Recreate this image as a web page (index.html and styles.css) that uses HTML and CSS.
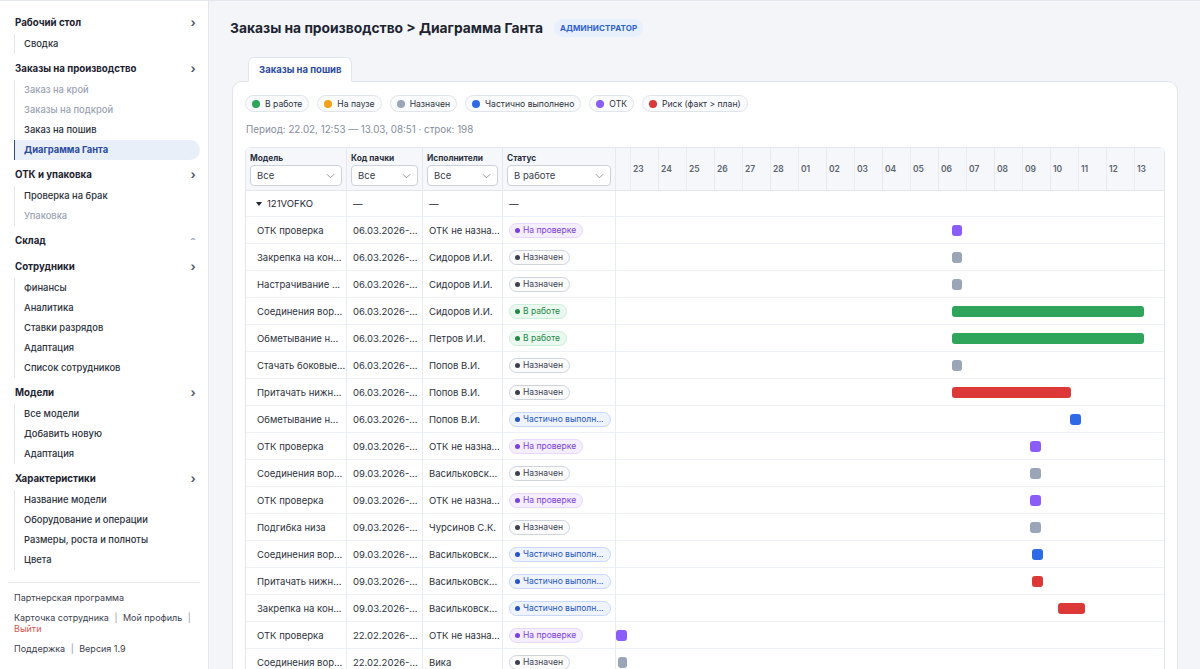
FILE: index.html
```html
<!DOCTYPE html>
<html lang="ru">
<head>
    <meta charset="UTF-8">
    <title>Диаграмма Ганта</title>
    <link rel="stylesheet" href="styles.css">
</head>
<body>
<div class="layout">
    <aside class="sidebar">
        <div class="nav-group">
            <div class="nav-title">Рабочий стол <span class="chev">›</span></div>
            <ul class="nav-sub">
                <li>Сводка</li>
            </ul>
        </div>
        <div class="nav-group">
            <div class="nav-title">Заказы на производство <span class="chev">›</span></div>
            <ul class="nav-sub">
                <li class="muted">Заказ на крой</li>
                <li class="muted">Заказы на подкрой</li>
                <li>Заказ на пошив</li>
                <li class="active">Диаграмма Ганта</li>
            </ul>
        </div>
        <div class="nav-group">
            <div class="nav-title">ОТК и упаковка <span class="chev">›</span></div>
            <ul class="nav-sub">
                <li>Проверка на брак</li>
                <li class="muted">Упаковка</li>
            </ul>
        </div>
        <div class="nav-group">
            <div class="nav-title">Склад <span class="chev up">ˆ</span></div>
        </div>
        <div class="nav-group">
            <div class="nav-title">Сотрудники <span class="chev">›</span></div>
            <ul class="nav-sub">
                <li>Финансы</li>
                <li>Аналитика</li>
                <li>Ставки разрядов</li>
                <li>Адаптация</li>
                <li>Список сотрудников</li>
            </ul>
        </div>
        <div class="nav-group">
            <div class="nav-title">Модели <span class="chev">›</span></div>
            <ul class="nav-sub">
                <li>Все модели</li>
                <li>Добавить новую</li>
                <li>Адаптация</li>
            </ul>
        </div>
        <div class="nav-group">
            <div class="nav-title">Характеристики <span class="chev">›</span></div>
            <ul class="nav-sub">
                <li>Название модели</li>
                <li>Оборудование и операции</li>
                <li>Размеры, роста и полноты</li>
                <li>Цвета</li>
            </ul>
        </div>
        <div class="side-footer">
            <p>Партнерская программа</p>
            <p>Карточка сотрудника <span class="sep">|</span> Мой профиль <span class="sep">|</span><br><span class="logout">Выйти</span></p>
            <p>Поддержка <span class="sep">|</span> Версия 1.9</p>
        </div>
    </aside>

    <main class="main">
        <div class="page-head">
            <h1>Заказы на производство &gt; Диаграмма Ганта</h1>
            <span class="role">Администратор</span>
        </div>

        <div class="tabs">
            <div class="tab">Заказы на пошив</div>
        </div>

        <section class="card">
            <div class="legend">
                <span class="pill"><i class="dot green"></i>В работе</span>
                <span class="pill"><i class="dot orange"></i>На паузе</span>
                <span class="pill"><i class="dot gray"></i>Назначен</span>
                <span class="pill"><i class="dot blue"></i>Частично выполнено</span>
                <span class="pill"><i class="dot purple"></i>ОТК</span>
                <span class="pill"><i class="dot red"></i>Риск (факт &gt; план)</span>
            </div>
            <p class="period">Период: 22.02, 12:53 — 13.03, 08:51 · строк: 198</p>

            <table class="gantt">
                <colgroup>
                    <col class="c-model">
                    <col class="c-code">
                    <col class="c-exec">
                    <col class="c-status">
                    <col>
                </colgroup>
                <thead>
                    <tr>
                        <th>
                            <div class="th-label">Модель</div>
                            <div class="select">Все<svg viewBox="0 0 10 6"><polyline points="1,1 5,5 9,1"/></svg></div>
                        </th>
                        <th>
                            <div class="th-label">Код пачки</div>
                            <div class="select">Все<svg viewBox="0 0 10 6"><polyline points="1,1 5,5 9,1"/></svg></div>
                        </th>
                        <th>
                            <div class="th-label">Исполнители</div>
                            <div class="select">Все<svg viewBox="0 0 10 6"><polyline points="1,1 5,5 9,1"/></svg></div>
                        </th>
                        <th>
                            <div class="th-label">Статус</div>
                            <div class="select">В работе<svg viewBox="0 0 10 6"><polyline points="1,1 5,5 9,1"/></svg></div>
                        </th>
                        <th class="days-head">
                            <div class="days">
                                <span>23</span><span>24</span><span>25</span><span>26</span><span>27</span><span>28</span><span>01</span><span>02</span><span>03</span><span>04</span><span>05</span><span>06</span><span>07</span><span>08</span><span>09</span><span>10</span><span>11</span><span>12</span><span>13</span>
                            </div>
                        </th>
                    </tr>
                </thead>
                <tbody>
                    <tr class="group">
                        <td><span class="caret"></span>121VOFKO</td>
                        <td>—</td><td>—</td><td>—</td><td class="track"></td>
                    </tr>
                    <tr>
                        <td>ОТК проверка</td><td>06.03.2026-...</td><td>ОТК не назна...</td>
                        <td><span class="badge check">На проверке</span></td>
                        <td class="track"><span class="bar purple" style="left:336px;width:10px"></span></td>
                    </tr>
                    <tr>
                        <td>Закрепка на кон...</td><td>06.03.2026-...</td><td>Сидоров И.И.</td>
                        <td><span class="badge assigned">Назначен</span></td>
                        <td class="track"><span class="bar gray" style="left:336px;width:10px"></span></td>
                    </tr>
                    <tr>
                        <td>Настрачивание ...</td><td>06.03.2026-...</td><td>Сидоров И.И.</td>
                        <td><span class="badge assigned">Назначен</span></td>
                        <td class="track"><span class="bar gray" style="left:336px;width:10px"></span></td>
                    </tr>
                    <tr>
                        <td>Соединения вор...</td><td>06.03.2026-...</td><td>Сидоров И.И.</td>
                        <td><span class="badge work">В работе</span></td>
                        <td class="track"><span class="bar green" style="left:336px;width:192px"></span></td>
                    </tr>
                    <tr>
                        <td>Обметывание н...</td><td>06.03.2026-...</td><td>Петров И.И.</td>
                        <td><span class="badge work">В работе</span></td>
                        <td class="track"><span class="bar green" style="left:336px;width:192px"></span></td>
                    </tr>
                    <tr>
                        <td>Стачать боковые...</td><td>06.03.2026-...</td><td>Попов В.И.</td>
                        <td><span class="badge assigned">Назначен</span></td>
                        <td class="track"><span class="bar gray" style="left:336px;width:10px"></span></td>
                    </tr>
                    <tr>
                        <td>Притачать нижн...</td><td>06.03.2026-...</td><td>Попов В.И.</td>
                        <td><span class="badge assigned">Назначен</span></td>
                        <td class="track"><span class="bar red" style="left:336px;width:119px"></span></td>
                    </tr>
                    <tr>
                        <td>Обметывание н...</td><td>06.03.2026-...</td><td>Попов В.И.</td>
                        <td><span class="badge partial">Частично выполн...</span></td>
                        <td class="track"><span class="bar blue" style="left:454px;width:11px"></span></td>
                    </tr>
                    <tr>
                        <td>ОТК проверка</td><td>09.03.2026-...</td><td>ОТК не назна...</td>
                        <td><span class="badge check">На проверке</span></td>
                        <td class="track"><span class="bar purple" style="left:414px;width:11px"></span></td>
                    </tr>
                    <tr>
                        <td>Соединения вор...</td><td>09.03.2026-...</td><td>Васильковск...</td>
                        <td><span class="badge assigned">Назначен</span></td>
                        <td class="track"><span class="bar gray" style="left:414px;width:11px"></span></td>
                    </tr>
                    <tr>
                        <td>ОТК проверка</td><td>09.03.2026-...</td><td>ОТК не назна...</td>
                        <td><span class="badge check">На проверке</span></td>
                        <td class="track"><span class="bar purple" style="left:414px;width:11px"></span></td>
                    </tr>
                    <tr>
                        <td>Подгибка низа</td><td>09.03.2026-...</td><td>Чурсинов С.К.</td>
                        <td><span class="badge assigned">Назначен</span></td>
                        <td class="track"><span class="bar gray" style="left:414px;width:11px"></span></td>
                    </tr>
                    <tr>
                        <td>Соединения вор...</td><td>09.03.2026-...</td><td>Васильковск...</td>
                        <td><span class="badge partial">Частично выполн...</span></td>
                        <td class="track"><span class="bar blue" style="left:416px;width:11px"></span></td>
                    </tr>
                    <tr>
                        <td>Притачать нижн...</td><td>09.03.2026-...</td><td>Васильковск...</td>
                        <td><span class="badge partial">Частично выполн...</span></td>
                        <td class="track"><span class="bar red" style="left:416px;width:11px"></span></td>
                    </tr>
                    <tr>
                        <td>Закрепка на кон...</td><td>09.03.2026-...</td><td>Васильковск...</td>
                        <td><span class="badge partial">Частично выполн...</span></td>
                        <td class="track"><span class="bar red" style="left:442px;width:27px"></span></td>
                    </tr>
                    <tr>
                        <td>ОТК проверка</td><td>22.02.2026-...</td><td>ОТК не назна...</td>
                        <td><span class="badge check">На проверке</span></td>
                        <td class="track"><span class="bar purple" style="left:0;width:11px"></span></td>
                    </tr>
                    <tr>
                        <td>Соединения вор...</td><td>22.02.2026-...</td><td>Вика</td>
                        <td><span class="badge assigned">Назначен</span></td>
                        <td class="track"><span class="bar gray" style="left:2px;width:9px"></span></td>
                    </tr>
                </tbody>
            </table>
        </section>
    </main>
</div>
</body>
</html>
```

FILE: styles.css
```css
/* General */
* {
    box-sizing: border-box;
}

html, body {
    margin: 0;
    height: 100%;
    overflow: hidden;
}

body {
    font-family: Inter, "Noto Sans", sans-serif;
    color: #1f2533;
    background-color: #f3f5f9;
}

.layout {
    display: flex;
    height: 100%;
    border-top: 1px solid #e4e7ee;
}

/* Sidebar */
.sidebar {
    width: 209px;
    flex-shrink: 0;
    background-color: #fff;
    border-right: 1px solid #e4e7ee;
    padding: 9px 8px 0 14px;
}

.nav-group {
    margin-bottom: 2px;
}

.nav-title {
    display: flex;
    justify-content: space-between;
    align-items: center;
    height: 24px;
    padding-left: 1px;
    font-size: 9.7px;
    font-weight: 700;
    color: #1c2230;
}

.chev {
    width: 14px;
    font-size: 12px;
    font-weight: 700;
    color: #555b68;
    text-align: center;
}

.chev.up {
    font-size: 13px;
    color: #a3a9b5;
    padding-top: 5px;
}

.nav-sub {
    list-style: none;
    margin: 0;
    padding: 0;
    border-left: 1px solid #e3e6ec;
}

.nav-sub li {
    height: 20px;
    line-height: 20px;
    padding-left: 9px;
    font-size: 9.4px;
    font-weight: 500;
    color: #2a303c;
}

.nav-sub li.muted {
    color: #9ba3b3;
}

.nav-sub li.active {
    margin-left: -1px;
    border-left: 1px solid #2b4a8f;
    border-radius: 0 10px 10px 0;
    background-color: #e9eff9;
    color: #2b4ba0;
    font-weight: 700;
}

.side-footer {
    margin: 12px 0 0 -6px;
    padding: 9px 0 0 6px;
    border-top: 1px solid #e6e9ef;
}

.side-footer p {
    margin: 0 0 9px;
    font-size: 9px;
    line-height: 11px;
    color: #3b4150;
}

.side-footer .sep {
    color: #8c93a0;
    margin: 0 3px;
}

.logout {
    color: #d9534f;
}

/* Main area */
.main {
    flex: 1;
    padding: 0 22px 0 23px;
    min-width: 0;
}

.page-head {
    display: flex;
    align-items: center;
    height: 56px;
    padding-bottom: 2px;
}

.page-head h1 {
    margin: 0 11px 0 -2px;
    font-size: 13.8px;
    font-weight: 700;
    color: #1e2431;
}

.role {
    padding: 4px 6px;
    border-radius: 9px;
    background-color: #e8f0fd;
    color: #2f62cc;
    font-size: 8px;
    font-weight: 700;
    text-transform: uppercase;
    letter-spacing: 0.1px;
}

/* Tabs */
.tabs {
    display: flex;
    padding-left: 16px;
    margin-bottom: -1px;
    position: relative;
}

.tab {
    height: 25px;
    line-height: 24px;
    padding: 0 10px;
    background-color: #fff;
    border: 1px solid #e3e6ec;
    border-bottom-color: #fff;
    border-radius: 6px 6px 0 0;
    color: #2b4ba0;
    font-size: 9.5px;
    font-weight: 700;
}

/* Card */
.card {
    background-color: #fff;
    border: 1px solid #e3e6ec;
    border-radius: 10px;
    padding: 13px 13px 0 12px;
    height: 620px;
}

.legend {
    display: flex;
    gap: 8px;
}

.pill {
    display: inline-flex;
    align-items: center;
    height: 17px;
    padding: 0 6px 0 6px;
    border: 1px solid #dfe3ea;
    border-radius: 9px;
    background-color: #fafbfc;
    font-size: 8.6px;
    color: #2d3340;
}

.dot {
    width: 8px;
    height: 8px;
    border-radius: 50%;
    margin-right: 5px;
}

.green { background-color: #2ea55a; }
.orange { background-color: #f0a21b; }
.gray { background-color: #9aa5b8; }
.blue { background-color: #2f6ae6; }
.purple { background-color: #8b5cf6; }
.red { background-color: #dc3838; }

.period {
    margin: 12px 0 12px 1px;
    font-size: 9.8px;
    color: #878e9c;
}

/* Gantt table */
.gantt {
    width: 920px;
    table-layout: fixed;
    border-collapse: separate;
    border-spacing: 0;
    border: 1px solid #e3e6ec;
    border-radius: 6px 6px 0 0;
    font-size: 9.5px;
}

.c-model { width: 101px; }
.c-code { width: 76px; }
.c-exec { width: 80px; }
.c-status { width: 113px; }

.gantt th {
    height: 42px;
    padding: 4px 4px 3px;
    background-color: #f5f7fa;
    border-right: 1px solid #e6e9ef;
    border-bottom: 1px solid #e3e6ec;
    text-align: left;
    vertical-align: top;
}

.th-label {
    font-size: 8.3px;
    font-weight: 700;
    color: #2a303c;
    margin: 1px 0 2px;
}

.select {
    display: flex;
    justify-content: space-between;
    align-items: center;
    height: 21px;
    padding: 0 6px;
    border: 1px solid #cdd2da;
    border-radius: 4px;
    background-color: #fff;
    font-size: 9.5px;
    font-weight: 400;
    color: #3a404c;
}

.select svg {
    width: 9px;
    height: 6px;
    fill: none;
    stroke: #8b919c;
    stroke-width: 1;
}

.gantt th.days-head {
    padding: 0 0 0 14px;
    border-right: none;
    vertical-align: middle;
}

.days {
    display: flex;
}

.days span {
    width: 28px;
    height: 42px;
    line-height: 42px;
    padding-left: 2px;
    border-left: 1px solid #e9ecf1;
    font-size: 8.5px;
    font-weight: 600;
    color: #5d6472;
}

.gantt td {
    height: 27px;
    padding: 0 6px;
    border-right: 1px solid #e9ecf1;
    border-bottom: 1px solid #edf0f4;
    white-space: nowrap;
    overflow: hidden;
    color: #2d3340;
}

.gantt .group td {
    height: 26px;
    color: #1f2533;
}

.gantt td:first-child {
    padding-left: 11px;
}

.gantt td.track {
    position: relative;
    padding: 0;
    border-right: none;
    overflow: visible;
}

.caret {
    display: inline-block;
    width: 0;
    height: 0;
    margin: 0 5px 1px -1px;
    border-left: 3px solid transparent;
    border-right: 3px solid transparent;
    border-top: 4px solid #1f2533;
    vertical-align: middle;
}

/* Status badges */
.badge {
    display: inline-flex;
    align-items: center;
    height: 15px;
    padding: 0 6px 0 5px;
    border: 1px solid;
    border-radius: 8px;
    font-size: 8.5px;
}

.badge::before {
    content: "";
    width: 5px;
    height: 5px;
    border-radius: 50%;
    margin-right: 3px;
    background-color: currentColor;
}

.badge.check {
    background-color: #f5eefe;
    border-color: #e6d9fb;
    color: #7a3fe0;
}

.badge.assigned {
    background-color: #fbfbfc;
    border-color: #cfd4dc;
    color: #3b4150;
}

.badge.work {
    background-color: #eaf8ef;
    border-color: #cdeeda;
    color: #1f8a45;
}

.badge.partial {
    width: 102px;
    background-color: #eef3fe;
    border-color: #c9d8f8;
    color: #2553c8;
}

/* Bars */
.bar {
    position: absolute;
    top: 8px;
    height: 11px;
    border-radius: 3px;
}
```
